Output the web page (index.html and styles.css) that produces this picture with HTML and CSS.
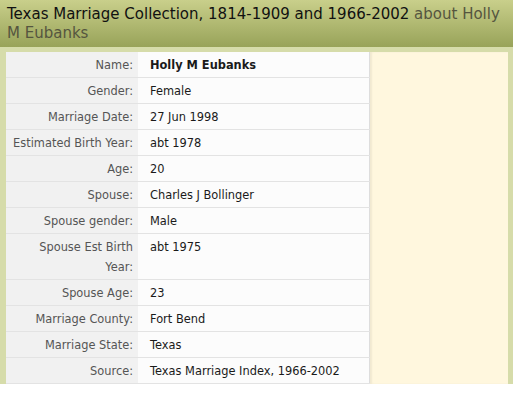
FILE: index.html
```html
<!DOCTYPE html>
<html>
<head>
<meta charset="utf-8">
<link rel="stylesheet" href="styles.css">
</head>
<body>
<div class="header">
  <h1 class="title">Texas Marriage Collection, 1814-1909 and 1966-2002 <span class="about">about Holly M Eubanks</span></h1>
</div>
<div class="content">
  <table class="record">
    <tr><th>Name:</th><td class="name">Holly M Eubanks</td></tr>
    <tr><th>Gender:</th><td>Female</td></tr>
    <tr><th>Marriage Date:</th><td>27 Jun 1998</td></tr>
    <tr><th>Estimated Birth Year:</th><td>abt 1978</td></tr>
    <tr><th>Age:</th><td>20</td></tr>
    <tr><th>Spouse:</th><td>Charles J Bollinger</td></tr>
    <tr><th>Spouse gender:</th><td>Male</td></tr>
    <tr><th>Spouse Est Birth Year:</th><td>abt 1975</td></tr>
    <tr><th>Spouse Age:</th><td>23</td></tr>
    <tr><th>Marriage County:</th><td>Fort Bend</td></tr>
    <tr><th>Marriage State:</th><td>Texas</td></tr>
    <tr><th>Source:</th><td>Texas Marriage Index, 1966-2002</td></tr>
  </table>
  <div class="side"></div>
</div>
</body>
</html>
```

FILE: styles.css
```css
html, body {
  margin: 0;
  padding: 0;
  background: #ffffff;
  font-family: Tahoma, "DejaVu Sans", Verdana, sans-serif;
}
.header {
  background: linear-gradient(#c9cf8b, #98a359);
  padding: 5px 7px 4px 7px;
  height: 38px;
}
.title {
  margin: 0;
  font-size: 15px;
  font-weight: normal;
  line-height: 19px;
  color: #111111;
}
.about {
  color: #55553f;
}
.content {
  display: flex;
  align-items: stretch;
  background: #d6dcaa;
  padding: 5px 5px 0 6px;
  width: 502px;
}
.record {
  border-collapse: collapse;
  width: 364px;
  font-size: 11.4px;
  border-right: 1px solid #dddddd;
}
.record th {
  width: 123px;
  background: #f1f1f1;
  color: #555555;
  font-weight: normal;
  text-align: right;
  vertical-align: top;
  padding: 3px 5px 2px 4px;
  line-height: 20px;
  border-bottom: 1px solid #e3e3e3;
}
.record td {
  background: #fcfcfc;
  color: #1a1a1a;
  vertical-align: top;
  padding: 3px 5px 2px 12px;
  line-height: 20px;
  border-bottom: 1px solid #e3e3e3;
}
.record td.name {
  font-weight: bold;
}
.side {
  flex: 1;
  background: #fff7de;
  box-shadow: inset 2px 0 2px rgba(0,0,0,0.06);
}
```
